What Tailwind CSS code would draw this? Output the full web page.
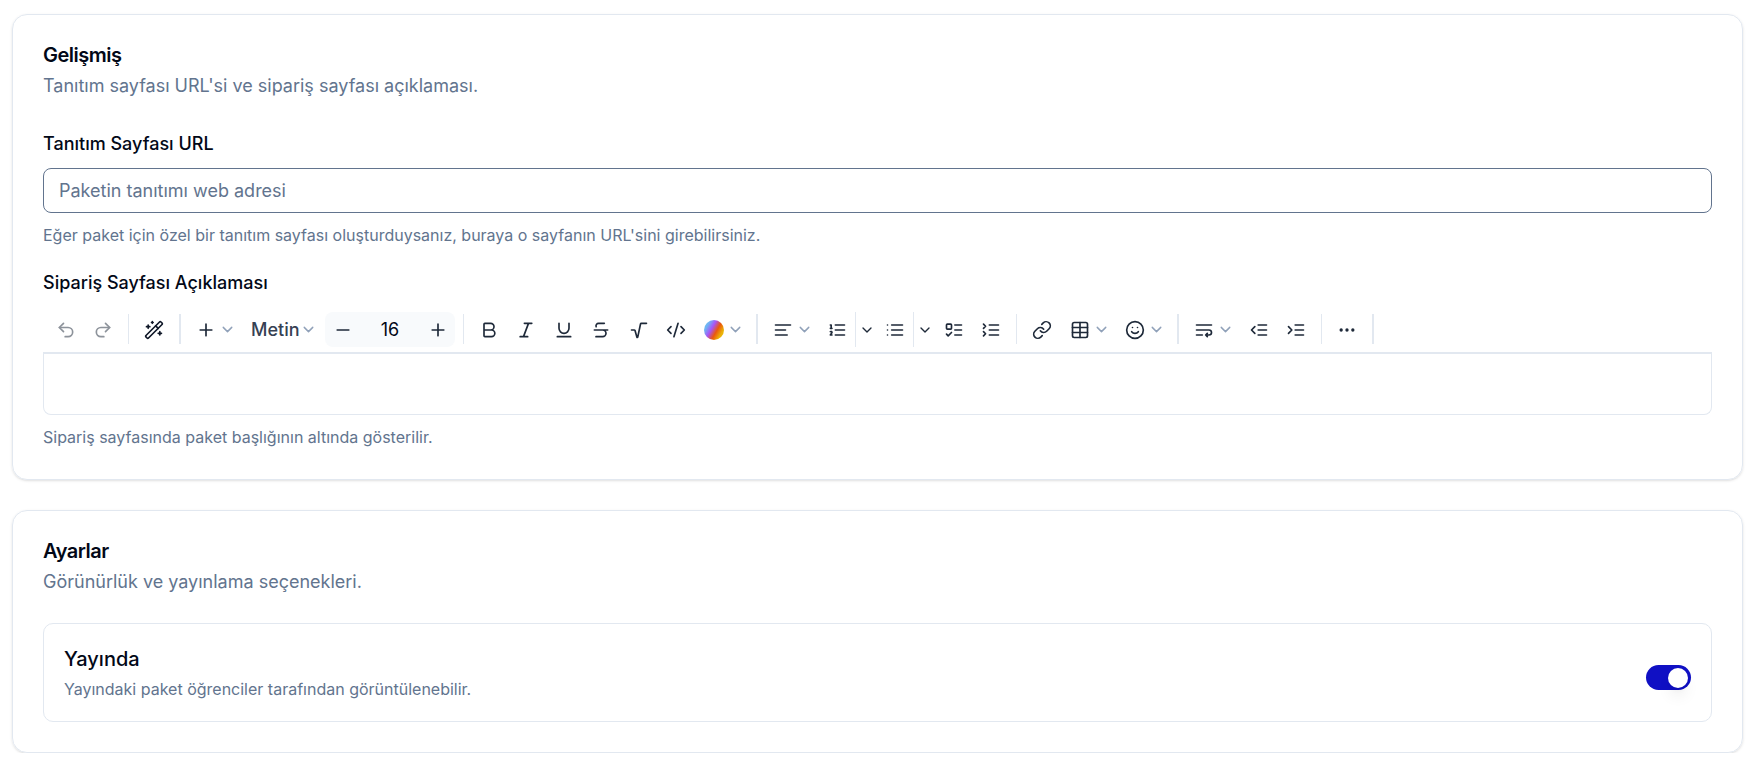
<!DOCTYPE html>
<html lang="tr">
<head>
    <meta charset="UTF-8">
    <meta name="viewport" content="width=device-width, initial-scale=1.0">
    <title>Paket Düzenle</title>
    <script src="https://cdn.jsdelivr.net/npm/@tailwindcss/browser@4"></script>
</head>
<body class="bg-white font-[Inter,sans-serif] text-[#020817]">
    <!-- İkonlar -->
    <svg class="hidden" xmlns="http://www.w3.org/2000/svg">
        <symbol id="chevron" viewBox="0 0 24 24"><path d="m6 9 6 6 6-6"/></symbol>
        <symbol id="undo" viewBox="0 0 24 24"><path d="M9 14 4 9l5-5"/><path d="M4 9h10.5a5.5 5.5 0 0 1 0 11H11"/></symbol>
        <symbol id="redo" viewBox="0 0 24 24"><path d="m15 14 5-5-5-5"/><path d="M20 9H9.5a5.5 5.5 0 0 0 0 11H13"/></symbol>
        <symbol id="wand" viewBox="0 0 24 24"><path d="m21.64 3.64-1.28-1.28a1.21 1.21 0 0 0-1.72 0L2.36 18.64a1.21 1.21 0 0 0 0 1.72l1.28 1.28a1.2 1.2 0 0 0 1.72 0L21.64 5.36a1.2 1.2 0 0 0 0-1.72"/><path d="m14 7 3 3M5 6v4M19 14v4M10 2v2M7 8H3M21 16h-4M11 3H9"/></symbol>
        <symbol id="plus" viewBox="0 0 24 24"><path d="M5 12h14M12 5v14"/></symbol>
        <symbol id="minus" viewBox="0 0 24 24"><path d="M5 12h14"/></symbol>
        <symbol id="bold" viewBox="0 0 24 24"><path d="M6 12h9a4 4 0 0 1 0 8H7a1 1 0 0 1-1-1V5a1 1 0 0 1 1-1h7a4 4 0 0 1 0 8"/></symbol>
        <symbol id="italic" viewBox="0 0 24 24"><path d="M19 4h-9M14 20H5M15 4 9 20"/></symbol>
        <symbol id="underline" viewBox="0 0 24 24"><path d="M6 4v6a6 6 0 0 0 12 0V4M4 20h16"/></symbol>
        <symbol id="strike" viewBox="0 0 24 24"><path d="M16 4H9a3 3 0 0 0-2.83 4M14 12a4 4 0 0 1 0 8H6M4 12h16"/></symbol>
        <symbol id="radical" viewBox="0 0 24 24"><path d="M3 12h3.28a1 1 0 0 1 .948.684l2.298 7.934a.5.5 0 0 0 .96-.044L13.82 4.771A1 1 0 0 1 14.792 4H21"/></symbol>
        <symbol id="code" viewBox="0 0 24 24"><path d="m18 16 4-4-4-4M6 8l-4 4 4 4M14.5 4l-5 16"/></symbol>
        <symbol id="align" viewBox="0 0 24 24"><path d="M15 12H3M17 18H3M21 6H3"/></symbol>
        <symbol id="ordered" viewBox="0 0 24 24"><path d="M10 12h11M10 18h11M10 6h11M4 10h2M4 6h1v4M6 18H4c0-1 2-2 2-3s-1-1.500-2-1"/></symbol>
        <symbol id="bullets" viewBox="0 0 24 24"><path d="M3 12h.01M3 18h.01M3 6h.01M8 12h13M8 18h13M8 6h13"/></symbol>
        <symbol id="todo" viewBox="0 0 24 24"><rect x="3" y="5" width="6" height="6" rx="1"/><path d="m3 17 2 2 4-4M13 6h8M13 12h8M13 18h8"/></symbol>
        <symbol id="collapse" viewBox="0 0 24 24"><path d="m3 10 2.500-2.500L3 5M3 19l2.500-2.500L3 14M10 6h11M10 12h11M10 18h11"/></symbol>
        <symbol id="link" viewBox="0 0 24 24"><path d="M10 13a5 5 0 0 0 7.540.540l3-3a5 5 0 0 0-7.070-7.070l-1.720 1.710"/><path d="M14 11a5 5 0 0 0-7.540-.540l-3 3a5 5 0 0 0 7.070 7.070l1.710-1.710"/></symbol>
        <symbol id="table" viewBox="0 0 24 24"><rect x="3" y="3" width="18" height="18" rx="2"/><path d="M12 3v18M3 9h18M3 15h18"/></symbol>
        <symbol id="smile" viewBox="0 0 24 24"><circle cx="12" cy="12" r="10"/><path d="M8 14s1.500 2 4 2 4-2 4-2M9 9h.01M15 9h.01"/></symbol>
        <symbol id="wrap" viewBox="0 0 24 24"><path d="M3 6h18M3 12h15a3 3 0 1 1 0 6h-4M16 16l-2 2 2 2M3 18h7"/></symbol>
        <symbol id="outdent" viewBox="0 0 24 24"><path d="M21 12H11M21 18H11M21 6H11M7 8l-4 4 4 4"/></symbol>
        <symbol id="indent" viewBox="0 0 24 24"><path d="M21 12H11M21 18H11M21 6H11M3 8l4 4-4 4"/></symbol>
        <symbol id="dots" viewBox="0 0 24 24"><circle cx="12" cy="12" r="1"/><circle cx="19" cy="12" r="1"/><circle cx="5" cy="12" r="1"/></symbol>
    </svg>

    <main class="flex flex-col gap-[30px] pt-[14px] pl-3 pr-[13px]">
        <!-- Gelişmiş -->
        <section class="rounded-[15px] border border-slate-200 p-[30px] pb-8 shadow-sm">
            <h2 class="text-[20px] leading-5 font-semibold tracking-tight">Gelişmiş</h2>
            <p class="mt-2 text-[18px] leading-[25px] text-slate-500">Tanıtım sayfası URL'si ve sipariş sayfası açıklaması.</p>

            <label for="tanitim-url" class="mt-9 block w-fit text-[18px] leading-5 font-medium">Tanıtım Sayfası URL</label>
            <input id="tanitim-url" type="url" placeholder="Paketin tanıtımı web adresi" class="mt-[14px] block h-[45px] w-full rounded-[8px] border border-slate-500 px-[15px] text-[18px] placeholder:text-slate-500">
            <p class="mt-3 text-[16px] leading-5 text-slate-500">Eğer paket için özel bir tanıtım sayfası oluşturduysanız, buraya o sayfanın URL'sini girebilirsiniz.</p>

            <label for="aciklama" class="mt-7 block w-fit text-[18px] leading-5 font-medium">Sipariş Sayfası Açıklaması</label>

            <!-- Editör Araç Çubuğu -->
            <div role="toolbar" aria-label="Biçimlendirme" class="mt-[19px] flex h-[42px] items-start overflow-hidden border-b-2 border-slate-200 pl-1 text-gray-800 **:[svg]:shrink-0 **:[svg]:fill-none **:[svg]:stroke-current **:[svg]:stroke-2 **:[svg]:[stroke-linecap:round] **:[svg]:[stroke-linejoin:round]">
                <div class="flex h-[35px] w-[75px] shrink-0 opacity-50">
                    <button disabled aria-label="Geri al" class="flex flex-1 items-center justify-center"><svg class="size-5"><use href="#undo"/></svg></button>
                    <button disabled aria-label="Yinele" class="flex flex-1 items-center justify-center"><svg class="size-5"><use href="#redo"/></svg></button>
                </div>
                <span class="mx-[6px] mt-[2px] h-[30px] w-px shrink-0 bg-slate-200"></span>
                <button aria-label="Yapay zeka" class="flex h-[35px] w-[38px] shrink-0 items-center justify-center text-gray-900"><svg class="size-5"><use href="#wand"/></svg></button>
                <span class="mx-[6px] mt-[2px] h-[30px] w-[2px] shrink-0 bg-slate-200"></span>
                <button aria-label="Ekle" class="flex h-[35px] shrink-0 items-center gap-[3px] pr-[6px] pl-[9px]"><svg class="size-5"><use href="#plus"/></svg><svg class="size-[17px] text-slate-400"><use href="#chevron"/></svg></button>
                <button class="flex h-[35px] w-[81px] shrink-0 items-center justify-between pr-[6px] pl-[9px] text-[18px] font-medium text-gray-700">Metin<svg class="size-[17px] text-slate-400"><use href="#chevron"/></svg></button>
                <div class="mx-[2px] flex h-[35px] w-[130px] shrink-0 rounded-[8px] bg-slate-50">
                    <button aria-label="Küçült" class="flex w-[35px] items-center justify-center"><svg class="size-5"><use href="#minus"/></svg></button>
                    <input aria-label="Yazı boyutu" type="text" value="16" class="min-w-0 flex-1 text-center text-[18px] text-[#020817]">
                    <button aria-label="Büyüt" class="flex w-[35px] items-center justify-center"><svg class="size-5"><use href="#plus"/></svg></button>
                </div>
                <span class="mx-[6px] mt-[2px] h-[30px] w-px shrink-0 bg-slate-200"></span>
                <div class="flex h-[35px] w-[225px] shrink-0">
                    <button aria-label="Kalın" class="flex flex-1 items-center justify-center"><svg class="size-5"><use href="#bold"/></svg></button>
                    <button aria-label="İtalik" class="flex flex-1 items-center justify-center"><svg class="size-5"><use href="#italic"/></svg></button>
                    <button aria-label="Altı çizili" class="flex flex-1 items-center justify-center"><svg class="size-5"><use href="#underline"/></svg></button>
                    <button aria-label="Üstü çizili" class="flex flex-1 items-center justify-center"><svg class="size-5"><use href="#strike"/></svg></button>
                    <button aria-label="Denklem" class="flex flex-1 items-center justify-center"><svg class="size-5"><use href="#radical"/></svg></button>
                    <button aria-label="Kod" class="flex flex-1 items-center justify-center"><svg class="size-5"><use href="#code"/></svg></button>
                </div>
                <button aria-label="Renk" class="flex h-[35px] shrink-0 items-center gap-[3px] pr-[6px] pl-[9px]"><span class="size-5 rounded-full bg-[linear-gradient(120deg,#6EB6F2_20%,#a855f7,#ea580c,#eab308_80%)]"></span><svg class="size-[17px] text-slate-400"><use href="#chevron"/></svg></button>
                <span class="mx-[6px] mt-[2px] h-[30px] w-[2px] shrink-0 bg-slate-200"></span>
                <button aria-label="Hizala" class="flex h-[35px] shrink-0 items-center gap-[3px] pr-[6px] pl-[9px]"><svg class="size-5"><use href="#align"/></svg><svg class="size-[17px] text-slate-400"><use href="#chevron"/></svg></button>
                <div class="flex h-[35px] shrink-0">
                    <button aria-label="Numaralı liste" class="flex w-9 items-center justify-center"><svg class="size-5"><use href="#ordered"/></svg></button>
                    <button aria-label="Numaralı liste türü" class="flex w-[22px] items-center justify-center border-l border-slate-200"><svg class="size-4"><use href="#chevron"/></svg></button>
                </div>
                <div class="flex h-[35px] shrink-0">
                    <button aria-label="Madde listesi" class="flex w-9 items-center justify-center"><svg class="size-5"><use href="#bullets"/></svg></button>
                    <button aria-label="Madde listesi türü" class="flex w-[22px] items-center justify-center border-l border-slate-200"><svg class="size-4"><use href="#chevron"/></svg></button>
                </div>
                <div class="flex h-[35px] w-[75px] shrink-0">
                    <button aria-label="Yapılacaklar" class="flex flex-1 items-center justify-center"><svg class="size-5"><use href="#todo"/></svg></button>
                    <button aria-label="Açılır liste" class="flex flex-1 items-center justify-center"><svg class="size-5"><use href="#collapse"/></svg></button>
                </div>
                <span class="mx-[6px] mt-[2px] h-[30px] w-px shrink-0 bg-slate-200"></span>
                <button aria-label="Bağlantı" class="flex h-[35px] w-[38px] shrink-0 items-center justify-center"><svg class="size-5"><use href="#link"/></svg></button>
                <button aria-label="Tablo" class="flex h-[35px] shrink-0 items-center gap-[3px] pr-[6px] pl-[9px]"><svg class="size-5"><use href="#table"/></svg><svg class="size-[17px] text-slate-400"><use href="#chevron"/></svg></button>
                <button aria-label="Emoji" class="flex h-[35px] shrink-0 items-center gap-[3px] pr-[6px] pl-[9px]"><svg class="size-5"><use href="#smile"/></svg><svg class="size-[17px] text-slate-400"><use href="#chevron"/></svg></button>
                <span class="mx-[6px] mt-[2px] h-[30px] w-[2px] shrink-0 bg-slate-200"></span>
                <button aria-label="Satır yüksekliği" class="flex h-[35px] shrink-0 items-center gap-[3px] pr-[6px] pl-[9px]"><svg class="size-5"><use href="#wrap"/></svg><svg class="size-[17px] text-slate-400"><use href="#chevron"/></svg></button>
                <div class="flex h-[35px] w-[75px] shrink-0">
                    <button aria-label="Girintiyi azalt" class="flex flex-1 items-center justify-center"><svg class="size-5"><use href="#outdent"/></svg></button>
                    <button aria-label="Girintiyi artır" class="flex flex-1 items-center justify-center"><svg class="size-5"><use href="#indent"/></svg></button>
                </div>
                <span class="mx-[6px] mt-[2px] h-[30px] w-px shrink-0 bg-slate-200"></span>
                <button aria-label="Diğer" class="flex h-[35px] w-[38px] shrink-0 items-center justify-center"><svg class="size-5"><use href="#dots"/></svg></button>
                <span class="mx-[6px] mt-[2px] h-[30px] w-[2px] shrink-0 bg-slate-200"></span>
            </div>
            <textarea id="aciklama" class="block h-[61px] w-full resize-none rounded-b-[8px] border border-t-0 border-slate-200 px-[15px] py-3 text-[18px]"></textarea>
            <p class="mt-3 text-[16px] leading-5 text-slate-500">Sipariş sayfasında paket başlığının altında gösterilir.</p>
        </section>

        <!-- Ayarlar -->
        <section class="rounded-[15px] border border-slate-200 p-[30px] shadow-sm">
            <h2 class="text-[20px] leading-5 font-semibold tracking-tight">Ayarlar</h2>
            <p class="mt-2 text-[18px] leading-[25px] text-slate-500">Görünürlük ve yayınlama seçenekleri.</p>

            <div class="mt-[29px] flex items-center justify-between rounded-[10px] border border-slate-200 p-5 pb-[22px]">
                <div>
                    <label for="yayinda" class="block text-[20px] leading-[30px] font-medium">Yayında</label>
                    <p class="mt-[5px] text-[16px] leading-5 text-slate-500">Yayındaki paket öğrenciler tarafından görüntülenebilir.</p>
                </div>
                <input id="yayinda" type="checkbox" role="switch" checked class="mt-3 flex h-[25px] w-[45px] shrink-0 appearance-none items-center rounded-full bg-slate-200 px-[3px] before:block before:size-5 before:rounded-full before:bg-white before:shadow-lg checked:justify-end checked:bg-[#1010c4]">
            </div>
        </section>
    </main>
</body>
</html>
